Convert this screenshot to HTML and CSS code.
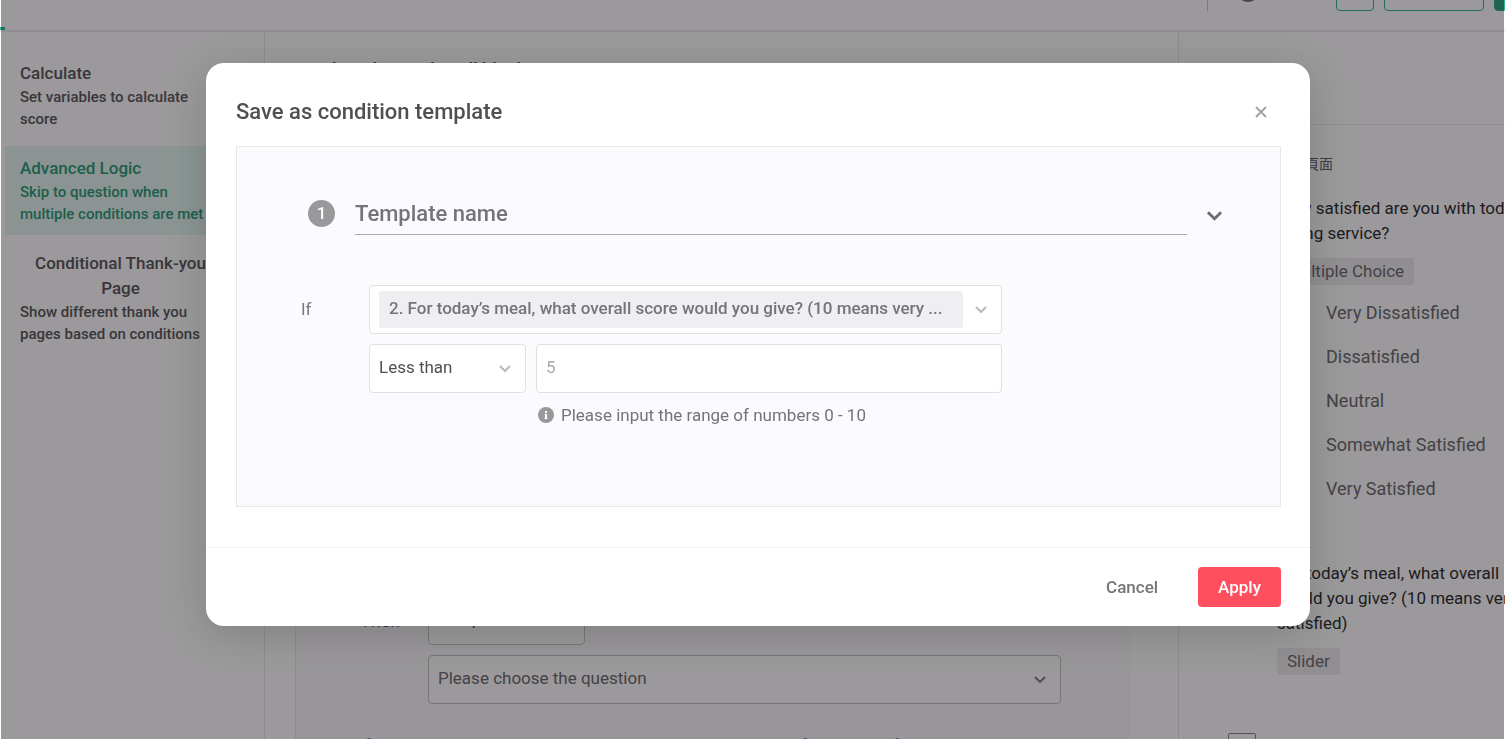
FILE: index.html
```html
<!DOCTYPE html>
<html lang="en">
<head>
	<meta charset="UTF-8">
	<title>Advanced Logic</title>
	<link rel="stylesheet" href="styles.css">
</head>
<body>
	<div class="page">
		<header class="topbar">
			<span class="tab-line"></span>
			<span class="divider"></span>
			<span class="avatar"></span>
			<button class="tool small" type="button" aria-label="More"></button>
			<button class="tool" type="button" aria-label="Preview"></button>
			<button class="tool fill" type="button" aria-label="Publish"></button>
		</header>
		<div class="columns">
			<nav class="sidebar">
				<button class="nav-item" type="button">
					<span class="nav-title">Calculate</span>
					<span class="nav-text">Set variables to calculate score</span>
				</button>
				<button class="nav-item active" type="button">
					<span class="nav-title">Advanced Logic</span>
					<span class="nav-text">Skip to question when multiple conditions are met</span>
				</button>
				<button class="nav-item" type="button">
					<span class="nav-title center">Conditional Thank-you Page</span>
					<span class="nav-text">Show different thank you pages based on conditions</span>
				</button>
			</nav>
			<main class="editor">
				<h1>Set the rules to skip all blocks</h1>
				<section class="block">
					<div class="rule">
						<label class="rule-label" for="action">Then</label>
						<div class="fields">
							<div class="select short">
								<select id="action"><option>Jump to</option></select>
								<svg class="arrow" viewBox="0 0 12 8"><path d="M1 1l5 5 5-5"/></svg>
							</div>
							<div class="select">
								<select class="muted" aria-label="Question"><option>Please choose the question</option></select>
								<svg class="arrow" viewBox="0 0 12 8"><path d="M1 1l5 5 5-5"/></svg>
							</div>
						</div>
					</div>
					<a class="note" href="#">If no conditions are met, the survey will be based on the default order of the questions in a row</a>
				</section>
			</main>
			<aside class="preview">
				<div class="preview-head"></div>
				<div class="preview-body">
					<p class="page-name">歡迎頁面</p>
					<div class="question">
						<span class="mark"></span>
						<div class="question-body">
							<p class="question-title">How satisfied are you with today’s<br>dining service?</p>
							<span class="tag">Multiple Choice</span>
							<ul class="options">
								<li>Very Dissatisfied</li>
								<li>Dissatisfied</li>
								<li>Neutral</li>
								<li>Somewhat Satisfied</li>
								<li>Very Satisfied</li>
							</ul>
						</div>
					</div>
					<div class="question">
						<span class="mark"></span>
						<div class="question-body">
							<p class="question-title">For today’s meal, what overall<br>would you give? (10 means very<br>satisfied)</p>
							<span class="tag">Slider</span>
						</div>
					</div>
					<div class="question">
						<span class="mark"></span>
					</div>
				</div>
			</aside>
		</div>
	</div>

	<div class="overlay">
		<form class="modal" role="dialog" aria-labelledby="modal-title">
			<div class="modal-head">
				<h2 id="modal-title">Save as condition template</h2>
				<button class="icon-btn" type="button" aria-label="Close">
					<svg class="close" viewBox="0 0 12 12"><path d="M1 1l10 10M11 1L1 11"/></svg>
				</button>
			</div>
			<div class="panel">
				<div class="name-row">
					<span class="badge">1</span>
					<input class="name" type="text" placeholder="Template name" aria-label="Template name">
					<button class="icon-btn toggle" type="button" aria-label="Collapse">
						<svg class="chevron" viewBox="0 0 16 10"><path d="M1 1l7 7 7-7"/></svg>
					</button>
				</div>
				<div class="rule">
					<label class="rule-label" for="question">If</label>
					<div class="fields">
						<div class="select chip">
							<select id="question"><option>2. For today’s meal, what overall score would you give? (10 means very ...</option></select>
							<svg class="arrow" viewBox="0 0 12 8"><path d="M1 1l5 5 5-5"/></svg>
						</div>
						<div class="pair">
							<div class="select short">
								<select aria-label="Operator"><option>Less than</option></select>
								<svg class="arrow" viewBox="0 0 12 8"><path d="M1 1l5 5 5-5"/></svg>
							</div>
							<div class="value">
								<input class="number" type="text" placeholder="5" aria-label="Value">
								<p class="hint">
									<svg class="info" viewBox="0 0 16 16"><circle cx="8" cy="8" r="8"/><path d="M7 4h2v2H7zM6.500 7H9v4h.5v1h-3v-1H7V8h-.5z"/></svg>
									Please input the range of numbers 0 - 10
								</p>
							</div>
						</div>
					</div>
				</div>
			</div>
			<div class="modal-foot">
				<button class="btn" type="button">Cancel</button>
				<button class="btn primary" type="submit">Apply</button>
			</div>
		</form>
	</div>
</body>
</html>
```
FILE: styles.css
```css
*{
	box-sizing: border-box;
}
body{
	margin: 0;
	font-family: Roboto, "Noto Sans CJK TC", sans-serif;
	font-size: 17px;
	color: #505052;
	background: #fff;
}
h1, h2, p, ul{
	margin: 0;
	padding: 0;
}
button, input, select{
	font-family: inherit;
	font-size: inherit;
	color: inherit;
}
button{
	border: none;
	background: none;
	padding: 0;
	cursor: pointer;
}
svg{
	fill: none;
	stroke: currentColor;
	stroke-width: 2;
}

/* page */
.page{
	height: 100vh;
	overflow: hidden;
	display: flex;
	flex-direction: column;
}
.topbar{
	flex: none;
	height: 32px;
	padding-bottom: 19px;
	border-bottom: 2px solid #eeedef;
	display: flex;
	align-items: flex-end;
	justify-content: flex-end;
	gap: 10px;
	position: relative;
	overflow: hidden;
}
.tab-line{
	position: absolute;
	left: 0;
	bottom: 0;
	width: 5px;
	height: 3px;
	background: #3bb590;
}
.divider{
	width: 1px;
	height: 32px;
	background: #ccc;
}
.avatar{
	width: 24px;
	height: 24px;
	margin: 0 66px 9px 18px;
	border-radius: 50%;
	background: #77777b;
}
.tool{
	width: 100px;
	height: 36px;
	border: 1px solid #3bb590;
	border-radius: 4px;
}
.tool.small{
	width: 38px;
}
.tool.fill{
	width: 11px;
	background: #2fa883;
	border-radius: 4px 0 0 4px;
}
.columns{
	flex: 1;
	min-height: 0;
	display: flex;
}
.sidebar{
	width: 265px;
	border-right: 1px solid #eae9ec;
	padding: 19px 0 0 5px;
}
.nav-item{
	display: block;
	width: 100%;
	padding: 10px 43px 10px 15px;
	margin-bottom: 6px;
	text-align: left;
	font-weight: 500;
	color: #5c5a60;
}
.nav-item.active{
	background: #e4f7f1;
	color: #2f9e7c;
}
.nav-title{
	display: block;
	line-height: 25px;
}
.nav-title.center{
	text-align: center;
}
.nav-text{
	display: block;
	font-size: 15px;
	line-height: 22px;
}
.editor{
	flex: 1;
	min-width: 0;
	padding: 25px 48px 0 30px;
	display: flex;
	flex-direction: column;
}
h1{
	font-size: 18px;
	line-height: 26px;
	font-weight: 500;
}
.block{
	flex: 1;
	margin-top: 20px;
	padding: 493px 64px 0;
	background: #fbfafc;
	border-left: 1px solid #eae9ec;
}
.note{
	display: block;
	margin-top: 31px;
	color: #4a90c8;
	text-decoration: none;
	white-space: nowrap;
}
.preview{
	width: 327px;
	border-left: 1px solid #e6e5e8;
	overflow: hidden;
	color: #303033;
}
.preview-head{
	height: 93px;
	border-bottom: 1px solid #eae9ec;
}
.preview-body{
	padding: 29px 0 0 49px;
}
.page-name{
	padding-left: 49px;
	margin-bottom: 22px;
	font-size: 14px;
	line-height: 20px;
	color: #66666a;
}
.question{
	display: flex;
	gap: 21px;
	margin-bottom: 50px;
}
.mark{
	flex: none;
	width: 28px;
	height: 28px;
	margin-top: 2px;
	border: 1px solid #88888c;
	border-radius: 2px;
}
.question-title{
	line-height: 25px;
	white-space: nowrap;
}
.tag{
	display: inline-block;
	margin: 12px 0 6px;
	padding: 0 10px;
	line-height: 27px;
	background: #eeedef;
	border-radius: 2px;
	color: #6e6e72;
}
.options{
	list-style: none;
	padding-left: 49px;
	font-size: 18px;
	line-height: 44px;
	color: #6e6e72;
	white-space: nowrap;
}

/* rule form */
.rule{
	display: flex;
}
.rule-label{
	width: 68px;
	line-height: 48px;
	color: #7a797d;
}
.block .rule-label{
	font-size: 18px;
	line-height: 50px;
	color: #5c5a60;
}
.fields{
	flex: 1;
	max-width: 633px;
	display: flex;
	flex-direction: column;
	gap: 10px;
}
.select{
	position: relative;
	height: 49px;
	background: #fff;
	border: 1px solid #e0dfe2;
	border-radius: 4px;
}
.block .select{
	border-color: #c4c3c6;
}
.select select{
	appearance: none;
	width: 100%;
	height: 100%;
	padding: 0 38px 3px 9px;
	border: none;
	background: none;
	outline: none;
}
.select .muted{
	color: #6e6e72;
}
.select.short{
	flex: none;
	width: 157px;
}
.select.chip{
	padding: 5px 38px 5px 9px;
}
.select.chip select{
	padding: 0 10px 3px;
	background: #efeef0;
	border-radius: 3px;
	font-weight: 500;
	color: #757478;
}
.arrow{
	position: absolute;
	right: 14px;
	top: 20px;
	width: 12px;
	height: 8px;
	color: #bab9bc;
	pointer-events: none;
}
.block .arrow{
	color: #88888c;
}
.pair{
	display: flex;
	gap: 10px;
}
.value{
	flex: 1;
}
.number{
	display: block;
	width: 100%;
	height: 49px;
	padding: 0 9px 3px;
	border: 1px solid #e0dfe2;
	border-radius: 4px;
	background: #fff;
	outline: none;
}
.number::placeholder{
	color: #a9a8ab;
}
.hint{
	display: flex;
	align-items: center;
	gap: 7px;
	margin-top: 10px;
	padding-left: 2px;
	line-height: 24px;
	color: #757478;
}
.info{
	width: 16px;
	height: 16px;
	stroke: none;
}
.info circle{
	fill: #99989b;
}
.info path{
	fill: #fff;
}

/* modal */
.overlay{
	position: fixed;
	top: 0;
	bottom: 0;
	left: 1px;
	right: 1px;
	padding: 63px 194px 0 205px;
	background: rgba(4, 0, 4, 0.4);
}
.modal{
	background: #fff;
	border-radius: 18px;
	box-shadow: 0 8px 40px rgba(0, 0, 0, 0.16);
}
.modal-head{
	display: flex;
	align-items: center;
	justify-content: space-between;
	padding: 31px 29px 16px 30px;
}
h2{
	font-size: 22px;
	line-height: 36px;
	font-weight: 500;
}
.icon-btn{
	display: flex;
	align-items: center;
	justify-content: center;
	width: 40px;
	height: 36px;
}
.close{
	width: 12px;
	height: 12px;
	color: #a3a2a5;
}
.panel{
	margin: 0 29px 40px 30px;
	padding: 45px 39px 79px 64px;
	background: #fbfafc;
	border: 1px solid #e8e7ea;
}
.name-row{
	display: flex;
	align-items: center;
	margin-bottom: 50px;
	padding-left: 7px;
}
.badge{
	width: 27px;
	height: 27px;
	margin-right: 20px;
	border-radius: 50%;
	background: #99989b;
	color: #fff;
	font-weight: 500;
	line-height: 27px;
	text-align: center;
}
.name{
	flex: 1;
	min-width: 0;
	height: 43px;
	padding: 0;
	border: none;
	border-bottom: 1px solid #a9a8ab;
	background: none;
	outline: none;
	font-size: 22px;
	font-weight: 500;
}
.name::placeholder{
	color: #757478;
}
.toggle{
	width: 54px;
	padding-top: 4px;
	color: #6e6e72;
}
.chevron{
	width: 15px;
	height: 10px;
	stroke-width: 3;
	overflow: visible;
}
.modal-foot{
	display: flex;
	justify-content: flex-end;
	gap: 20px;
	padding: 19px 29px 19px 30px;
	border-top: 1px solid #f3f2f5;
}
.btn{
	height: 40px;
	padding: 0 20px;
	border-radius: 4px;
	font-weight: 500;
	color: #757478;
}
.btn.primary{
	background: #ff4f5e;
	color: #fff;
}
```
